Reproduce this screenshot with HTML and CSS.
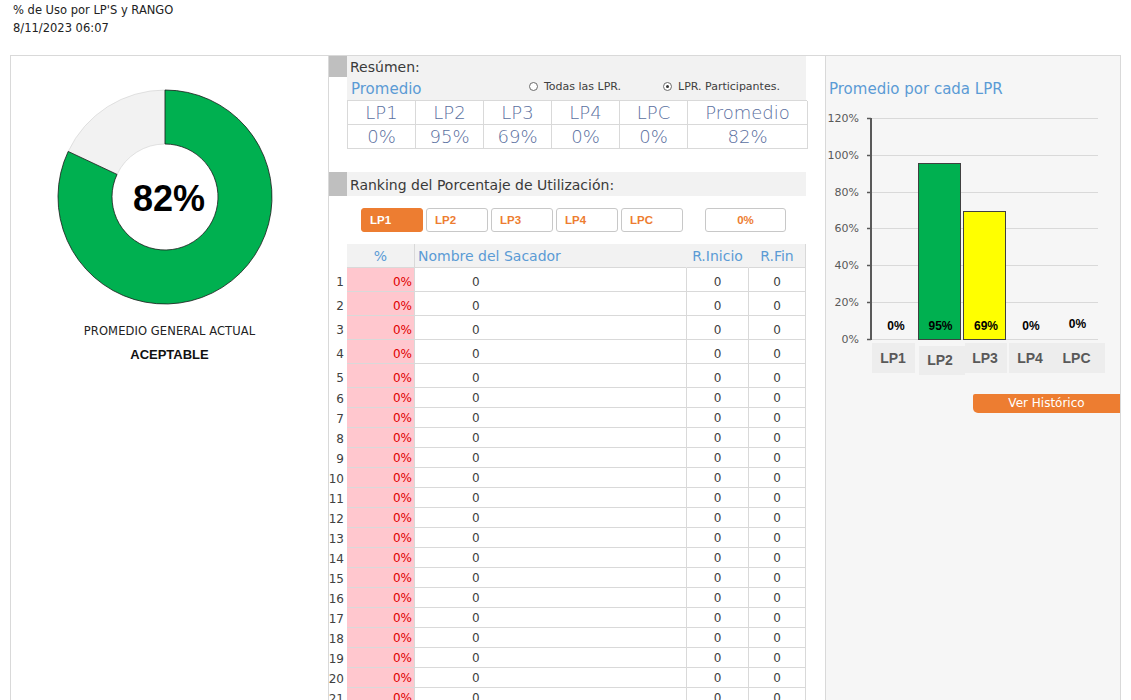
FILE: index.html
```html
<!DOCTYPE html>
<html lang="es">
<head>
<meta charset="utf-8">
<title>% de Uso por LP'S y RANGO</title>
<link rel="stylesheet" href="styles.css">
</head>
<body>
<header class="top">
  <div class="title">% de Uso por LP'S y RANGO</div>
  <div class="date">8/11/2023 06:07</div>
</header>
<main class="frame">
  <section class="left">
    <svg class="donut" width="218" height="218" viewBox="0 0 218 218">
      <path d="M12.18,63.44 A107,107 0 0 1 109,2 L109,56 A53,53 0 0 0 61.05,86.43 Z" fill="#f2f2f2" stroke="#d0d0d0" stroke-width="0.6"/>
      <path d="M109,2 A107,107 0 1 1 12.18,63.44 L61.05,86.43 A53,53 0 1 0 109,56 Z" fill="#00b050" stroke="#1a1a1a" stroke-width="0.8"/>
      <text x="113" y="110" text-anchor="middle" dominant-baseline="central" class="donut-val">82%</text>
    </svg>
    <div class="gen-label">PROMEDIO GENERAL ACTUAL</div>
    <div class="gen-status">ACEPTABLE</div>
  </section>

  <section class="middle">
    <div class="sec-head sec-resumen">
      <div class="sq sq-short"></div>
      <div class="band band-tall">
        <div class="band-title">Resúmen:</div>
        <div class="band-row">
          <span class="promedio">Promedio</span>
          <span class="radio radio-all"><span class="dot"></span>Todas las LPR.</span>
          <span class="radio radio-on"><span class="dot"></span>LPR. Participantes.</span>
        </div>
      </div>
    </div>
    <div class="summary">
      <div class="s-cell">LP1</div><div class="s-cell">LP2</div><div class="s-cell">LP3</div><div class="s-cell">LP4</div><div class="s-cell">LPC</div><div class="s-cell">Promedio</div>
      <div class="s-cell">0%</div><div class="s-cell">95%</div><div class="s-cell">69%</div><div class="s-cell">0%</div><div class="s-cell">0%</div><div class="s-cell">82%</div>
    </div>

    <div class="sec-head sec-ranking">
      <div class="sq"></div>
      <div class="band">
        <div class="band-title">Ranking del Porcentaje de Utilización:</div>
      </div>
    </div>

    <div class="btns">
      <span class="btn btn-on">LP1</span>
      <span class="btn">LP2</span>
      <span class="btn">LP3</span>
      <span class="btn">LP4</span>
      <span class="btn">LPC</span>
      <span class="btn btn-pct">0%</span>
    </div>

    <div class="rank">
      <div class="r-row r-head">
        <div class="c-num"></div>
        <div class="c-pct">%</div>
        <div class="c-name">Nombre del Sacador</div>
        <div class="c-ini">R.Inicio</div>
        <div class="c-fin">R.Fin</div>
      </div>
      <div class="r-row r-big"><div class="c-num">1</div><div class="c-pct">0%</div><div class="c-name">0</div><div class="c-ini">0</div><div class="c-fin">0</div></div>
      <div class="r-row r-big"><div class="c-num">2</div><div class="c-pct">0%</div><div class="c-name">0</div><div class="c-ini">0</div><div class="c-fin">0</div></div>
      <div class="r-row r-big"><div class="c-num">3</div><div class="c-pct">0%</div><div class="c-name">0</div><div class="c-ini">0</div><div class="c-fin">0</div></div>
      <div class="r-row r-big"><div class="c-num">4</div><div class="c-pct">0%</div><div class="c-name">0</div><div class="c-ini">0</div><div class="c-fin">0</div></div>
      <div class="r-row r-big"><div class="c-num">5</div><div class="c-pct">0%</div><div class="c-name">0</div><div class="c-ini">0</div><div class="c-fin">0</div></div>
      <div class="r-row"><div class="c-num">6</div><div class="c-pct">0%</div><div class="c-name">0</div><div class="c-ini">0</div><div class="c-fin">0</div></div>
      <div class="r-row"><div class="c-num">7</div><div class="c-pct">0%</div><div class="c-name">0</div><div class="c-ini">0</div><div class="c-fin">0</div></div>
      <div class="r-row"><div class="c-num">8</div><div class="c-pct">0%</div><div class="c-name">0</div><div class="c-ini">0</div><div class="c-fin">0</div></div>
      <div class="r-row"><div class="c-num">9</div><div class="c-pct">0%</div><div class="c-name">0</div><div class="c-ini">0</div><div class="c-fin">0</div></div>
      <div class="r-row"><div class="c-num">10</div><div class="c-pct">0%</div><div class="c-name">0</div><div class="c-ini">0</div><div class="c-fin">0</div></div>
      <div class="r-row"><div class="c-num">11</div><div class="c-pct">0%</div><div class="c-name">0</div><div class="c-ini">0</div><div class="c-fin">0</div></div>
      <div class="r-row"><div class="c-num">12</div><div class="c-pct">0%</div><div class="c-name">0</div><div class="c-ini">0</div><div class="c-fin">0</div></div>
      <div class="r-row"><div class="c-num">13</div><div class="c-pct">0%</div><div class="c-name">0</div><div class="c-ini">0</div><div class="c-fin">0</div></div>
      <div class="r-row"><div class="c-num">14</div><div class="c-pct">0%</div><div class="c-name">0</div><div class="c-ini">0</div><div class="c-fin">0</div></div>
      <div class="r-row"><div class="c-num">15</div><div class="c-pct">0%</div><div class="c-name">0</div><div class="c-ini">0</div><div class="c-fin">0</div></div>
      <div class="r-row"><div class="c-num">16</div><div class="c-pct">0%</div><div class="c-name">0</div><div class="c-ini">0</div><div class="c-fin">0</div></div>
      <div class="r-row"><div class="c-num">17</div><div class="c-pct">0%</div><div class="c-name">0</div><div class="c-ini">0</div><div class="c-fin">0</div></div>
      <div class="r-row"><div class="c-num">18</div><div class="c-pct">0%</div><div class="c-name">0</div><div class="c-ini">0</div><div class="c-fin">0</div></div>
      <div class="r-row"><div class="c-num">19</div><div class="c-pct">0%</div><div class="c-name">0</div><div class="c-ini">0</div><div class="c-fin">0</div></div>
      <div class="r-row"><div class="c-num">20</div><div class="c-pct">0%</div><div class="c-name">0</div><div class="c-ini">0</div><div class="c-fin">0</div></div>
      <div class="r-row"><div class="c-num">21</div><div class="c-pct">0%</div><div class="c-name">0</div><div class="c-ini">0</div><div class="c-fin">0</div></div>
    </div>
  </section>

  <section class="right">
    <div class="chart-title">Promedio por cada LPR</div>
    <svg class="chart" width="295" height="275" viewBox="0 0 295 275">
      <g class="grid" stroke="#d9d9d9" stroke-width="1">
        <line x1="46" y1="10.5" x2="273" y2="10.5"/>
        <line x1="46" y1="47.5" x2="273" y2="47.5"/>
        <line x1="46" y1="84.5" x2="273" y2="84.5"/>
        <line x1="46" y1="120.5" x2="273" y2="120.5"/>
        <line x1="46" y1="157.5" x2="273" y2="157.5"/>
        <line x1="46" y1="194.5" x2="273" y2="194.5"/>
        <line x1="46" y1="231.5" x2="273" y2="231.5"/>
      </g>
      <g class="ylab">
        <text x="34" y="10.5">120%</text>
        <text x="34" y="47.5">100%</text>
        <text x="34" y="84.5">80%</text>
        <text x="34" y="120.5">60%</text>
        <text x="34" y="157.5">40%</text>
        <text x="34" y="194.5">20%</text>
        <text x="34" y="231.5">0%</text>
      </g>
      <rect x="93.5" y="55.5" width="42" height="176" fill="#00b050" stroke="#404040" stroke-width="1"/>
      <rect x="138.5" y="103.5" width="42" height="128" fill="#ffff00" stroke="#404040" stroke-width="1"/>
      <g stroke="#595959" stroke-width="2">
        <line x1="46" y1="10" x2="46" y2="232"/>
      </g>
      <g stroke="#595959" stroke-width="1.5">
        <line x1="42" y1="10.5" x2="46" y2="10.5"/>
        <line x1="42" y1="47.5" x2="46" y2="47.5"/>
        <line x1="42" y1="84.5" x2="46" y2="84.5"/>
        <line x1="42" y1="120.5" x2="46" y2="120.5"/>
        <line x1="42" y1="157.5" x2="46" y2="157.5"/>
        <line x1="42" y1="194.5" x2="46" y2="194.5"/>
        <line x1="42" y1="231.5" x2="46" y2="231.5"/>
      </g>
      <g class="dlab">
        <text x="71" y="218">0%</text>
        <text x="115.5" y="218">95%</text>
        <text x="161" y="218">69%</text>
        <text x="206" y="218">0%</text>
        <text x="252.5" y="216">0%</text>
      </g>
      <g fill="#ededed">
        <rect x="47" y="235" width="43" height="30"/>
        <rect x="94" y="238" width="46" height="29"/>
        <rect x="140" y="235" width="42" height="30"/>
        <rect x="184" y="235" width="96" height="30"/>
      </g>
      <g class="xlab">
        <text x="68" y="250">LP1</text>
        <text x="115" y="252">LP2</text>
        <text x="160" y="250">LP3</text>
        <text x="205" y="250">LP4</text>
        <text x="251.5" y="250">LPC</text>
      </g>
    </svg>
    <div class="hist-wrap"><span class="hist-btn">Ver Histórico</span></div>
  </section>
</main>
</body>
</html>
```

FILE: styles.css
```css
* { box-sizing: border-box; }
html, body { margin: 0; padding: 0; background: #fff; }
body {
  font-family: "DejaVu Sans", "Liberation Sans", sans-serif;
  color: #333;
  width: 1131px;
  height: 700px;
  overflow: hidden;
}

.top { padding: 1px 0 0 13px; font-size: 11.5px; line-height: 18px; color: #222; }

.frame {
  margin: 18px 0 0 10px;
  width: 1111px;
  height: 645px;
  overflow: hidden;
  border: 1px solid #d9d9d9;
  border-bottom: none;
  display: grid;
  grid-template-columns: 317px 497px 295px;
}

/* left */
.left { display: flex; flex-direction: column; align-items: center; padding-top: 32px; }
.donut { align-self: flex-start; margin-left: 45px; display: block; }
.donut-val { font-family: "Liberation Sans", sans-serif; font-weight: 700; font-size: 36px; fill: #000; }
.gen-label { margin-top: 17px; font-size: 11.5px; line-height: 16px; color: #222; letter-spacing: 0.1px; }
.gen-status { margin-top: 8px; font-size: 13px; line-height: 16px; font-weight: 700; color: #111; font-family: "Liberation Sans", sans-serif; }

/* middle */
.middle { border-left: 1px solid #d9d9d9; display: flex; flex-direction: column; }
.sec-head { display: flex; align-items: flex-start; }
.sq { width: 18px; height: 24px; background: #bfbfbf; flex: none; }
.sq-short { height: 21px; }
.band { width: 459px; height: 24px; background: #f2f2f2; padding-left: 3px; }
.band-tall { height: 44px; }
.band-title { font-size: 14px; line-height: 22px; color: #3a3a3a; }
.sec-ranking .band-title { line-height: 26px; }
.band-row { display: flex; align-items: center; height: 22px; }
.promedio { font-size: 15px; color: #5b9bd5; width: 179px; padding-left: 1px; }
.radio { display: inline-flex; align-items: center; font-size: 11px; color: #404040; margin-bottom: 6px; }
.radio-all { width: 134px; }
.dot {
  width: 9px; height: 9px; border-radius: 50%;
  border: 1px solid #6a6a6a; background: #fff; margin-right: 6px;
  position: relative;
}
.radio-on .dot::after {
  content: ""; position: absolute; left: 2px; top: 2px; width: 3px; height: 3px; border-radius: 50%; background: #333;
}

.summary {
  margin-left: 18px;
  width: 460px;
  display: grid;
  grid-template-columns: 68px 68px 68px 68px 68px 120px;
  border-top: 1px solid #d9d9d9;
  border-left: 1px solid #d9d9d9;
}
.s-cell {
  height: 24px;
  border-right: 1px solid #d9d9d9;
  border-bottom: 1px solid #d9d9d9;
  text-align: center;
  font-size: 18px;
  line-height: 23px;
  color: #5a6fa0;
  font-weight: 300;
}

.sec-ranking { margin-top: 23px; }

.btns { display: flex; gap: 3px; margin: 12px 0 0 32px; height: 24px; }
.btn {
  width: 62px; height: 24px;
  border: 1px solid #c8c8c8; border-radius: 3px;
  font-family: "Liberation Sans", sans-serif;
  font-size: 11.5px; font-weight: 700; color: #ed7d31;
  line-height: 22px; padding-left: 8px; background: #fff;
}
.btn-on { background: #ed7d31; color: #fff; border-color: #ed7d31; }
.btn-pct { margin-left: 19px; width: 81px; text-align: center; padding-left: 0; }

.rank { margin-top: 12px; }
.r-row {
  display: grid;
  grid-template-columns: 18px 68px 272px 62px 57px;
  height: 20px;
  font-size: 12px;
  color: #404040;
}
.r-big { height: 24px; }
.r-row > div { border-bottom: 1px solid #d9d9d9; border-right: 1px solid #d9d9d9; display: flex; align-items: center; padding-top: 1px; }
.r-big > div { padding-top: 4px; }
.r-row > .c-num { border: none; justify-content: flex-end; padding-right: 3px; font-size: 12px; }
.c-pct { background: #ffc7ce; color: #e00000; justify-content: flex-end; padding-right: 2px; }
.c-name { padding-left: 57px; }
.c-ini, .c-fin { justify-content: center; }
.r-head { height: 24px; }
.r-head > div { background: #f2f2f2; color: #5b9bd5; font-size: 14px; padding-top: 0; }
.r-head > .c-num { background: #fff; }
.r-head > .c-pct { justify-content: center; padding-right: 0; color: #5b9bd5; }
.r-head > .c-name { padding-left: 3px; border-right-color: #f2f2f2; }
.r-head > .c-ini { border-right-color: #f2f2f2; }

/* right */
.right { border-left: 1px solid #d9d9d9; background: #f6f6f6; padding-top: 23px; }
.chart-title { font-size: 15px; line-height: 20px; color: #5b9bd5; padding-left: 3px; }
.chart { display: block; margin-top: 9px; margin-left: -1px; }
.ylab text { font-size: 11px; fill: #595959; text-anchor: end; dominant-baseline: central; }
.dlab text { font-family: "Liberation Sans", sans-serif; font-size: 12px; font-weight: 700; fill: #000; text-anchor: middle; dominant-baseline: central; }
.xlab text { font-family: "Liberation Sans", sans-serif; font-size: 14px; font-weight: 700; fill: #595959; text-anchor: middle; dominant-baseline: central; }
.hist-wrap { display: flex; justify-content: flex-end; margin-top: 11px; }
.hist-btn {
  width: 147px; height: 19px;
  background: #ed7d31; color: #fff;
  font-size: 12px; line-height: 19px; text-align: center;
  border-radius: 2px 0 0 5px;
}
```
